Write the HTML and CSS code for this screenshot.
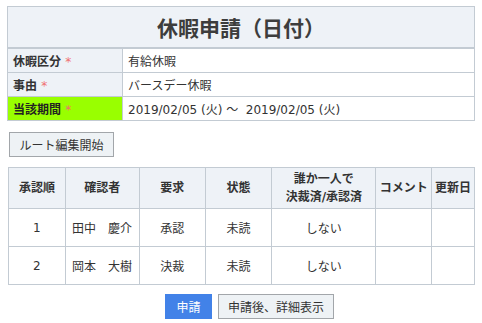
FILE: index.html
```html
<!DOCTYPE html>
<html lang="ja">
<head>
    <meta charset="UTF-8">
    <title>休暇申請（日付）</title>
    <link rel="stylesheet" href="styles.css">
</head>
<body>

<table class="info">
    <tr>
        <th colspan="2" class="title">休暇申請（日付）</th>
    </tr>
    <tr>
        <th class="label">休暇区分 <span class="req">*</span></th>
        <td>有給休暇</td>
    </tr>
    <tr>
        <th class="label">事由 <span class="req">*</span></th>
        <td>バースデー休暇</td>
    </tr>
    <tr>
        <th class="label period">当該期間 <span class="req">*</span></th>
        <td>2019/02/05 (火) ～&nbsp; 2019/02/05 (火)</td>
    </tr>
</table>

<button type="button" class="btn route">ルート編集開始</button>

<table class="route-table">
    <tr>
        <th class="c1">承認順</th>
        <th class="c2">確認者</th>
        <th class="c3">要求</th>
        <th class="c4">状態</th>
        <th class="c5">誰か一人で<br>決裁済/承認済</th>
        <th class="c6">コメント</th>
        <th class="c7">更新日</th>
    </tr>
    <tr>
        <td class="center">1</td>
        <td>田中　慶介</td>
        <td class="center">承認</td>
        <td class="center">未読</td>
        <td class="center">しない</td>
        <td></td>
        <td></td>
    </tr>
    <tr>
        <td class="center">2</td>
        <td>岡本　大樹</td>
        <td class="center">決裁</td>
        <td class="center">未読</td>
        <td class="center">しない</td>
        <td></td>
        <td></td>
    </tr>
</table>

<div class="actions">
    <button type="button" class="btn primary">申請</button>
    <button type="button" class="btn">申請後、詳細表示</button>
</div>

</body>
</html>
```

FILE: styles.css
```css
body {
    font-family: "DejaVu Sans", "Noto Sans CJK JP", sans-serif;
    font-size: 12px;
    color: #333;
    margin: 6px 7px;
    background-color: #fff;
}

table {
    border-collapse: collapse;
}

th, td {
    border: 1px solid #c3cbd3;
    font-size: 12px;
}

th {
    background-color: #eef2f7;
}

.info {
    width: 468px;
}

.info .title {
    height: 40px;
    padding: 0;
    font-size: 21px;
    font-weight: bold;
    color: #3d3d3d;
    text-align: center;
    border-bottom: 2px solid #c3cbd3;
}

.info .label {
    width: 104px;
    height: 23px;
    padding: 0 5px;
    text-align: left;
}

.info td {
    padding: 0 5px;
}

.info .period {
    background-color: #99ff00;
    color: #222;
}

.req {
    color: #f07070;
    font-weight: normal;
}

.btn {
    font-family: "DejaVu Sans", "Noto Sans CJK JP", sans-serif;
    font-size: 12px;
    color: #333;
    height: 25px;
    padding: 0 10px;
    background-color: #eef2f5;
    border: 1px solid #a2a6aa;
    cursor: pointer;
}

.route {
    display: block;
    margin: 11px 0 0 2px;
    width: 105px;
    padding: 0;
}

.route-table {
    width: 467px;
    margin: 10px 0 0 1px;
}

.route-table th {
    height: 40px;
    padding: 0;
    line-height: 18px;
}

.route-table td {
    height: 37px;
    padding: 0 6px;
}

.route-table .center {
    text-align: center;
}

.c1 { width: 56px; }
.c2 { width: 73px; }
.c3 { width: 65px; }
.c4 { width: 66px; }
.c5 { width: 103px; }
.c6 { width: 55px; }
.c7 { width: 42px; }

.actions {
    display: flex;
    justify-content: center;
    gap: 6px;
    margin-top: 9px;
    padding-left: 17px;
}

.actions .primary {
    width: 47px;
    padding: 0;
    background-color: #4282e8;
    border-color: #4282e8;
    color: #fff;
}

.actions .btn:not(.primary) {
    width: 116px;
    padding: 0;
}
```
